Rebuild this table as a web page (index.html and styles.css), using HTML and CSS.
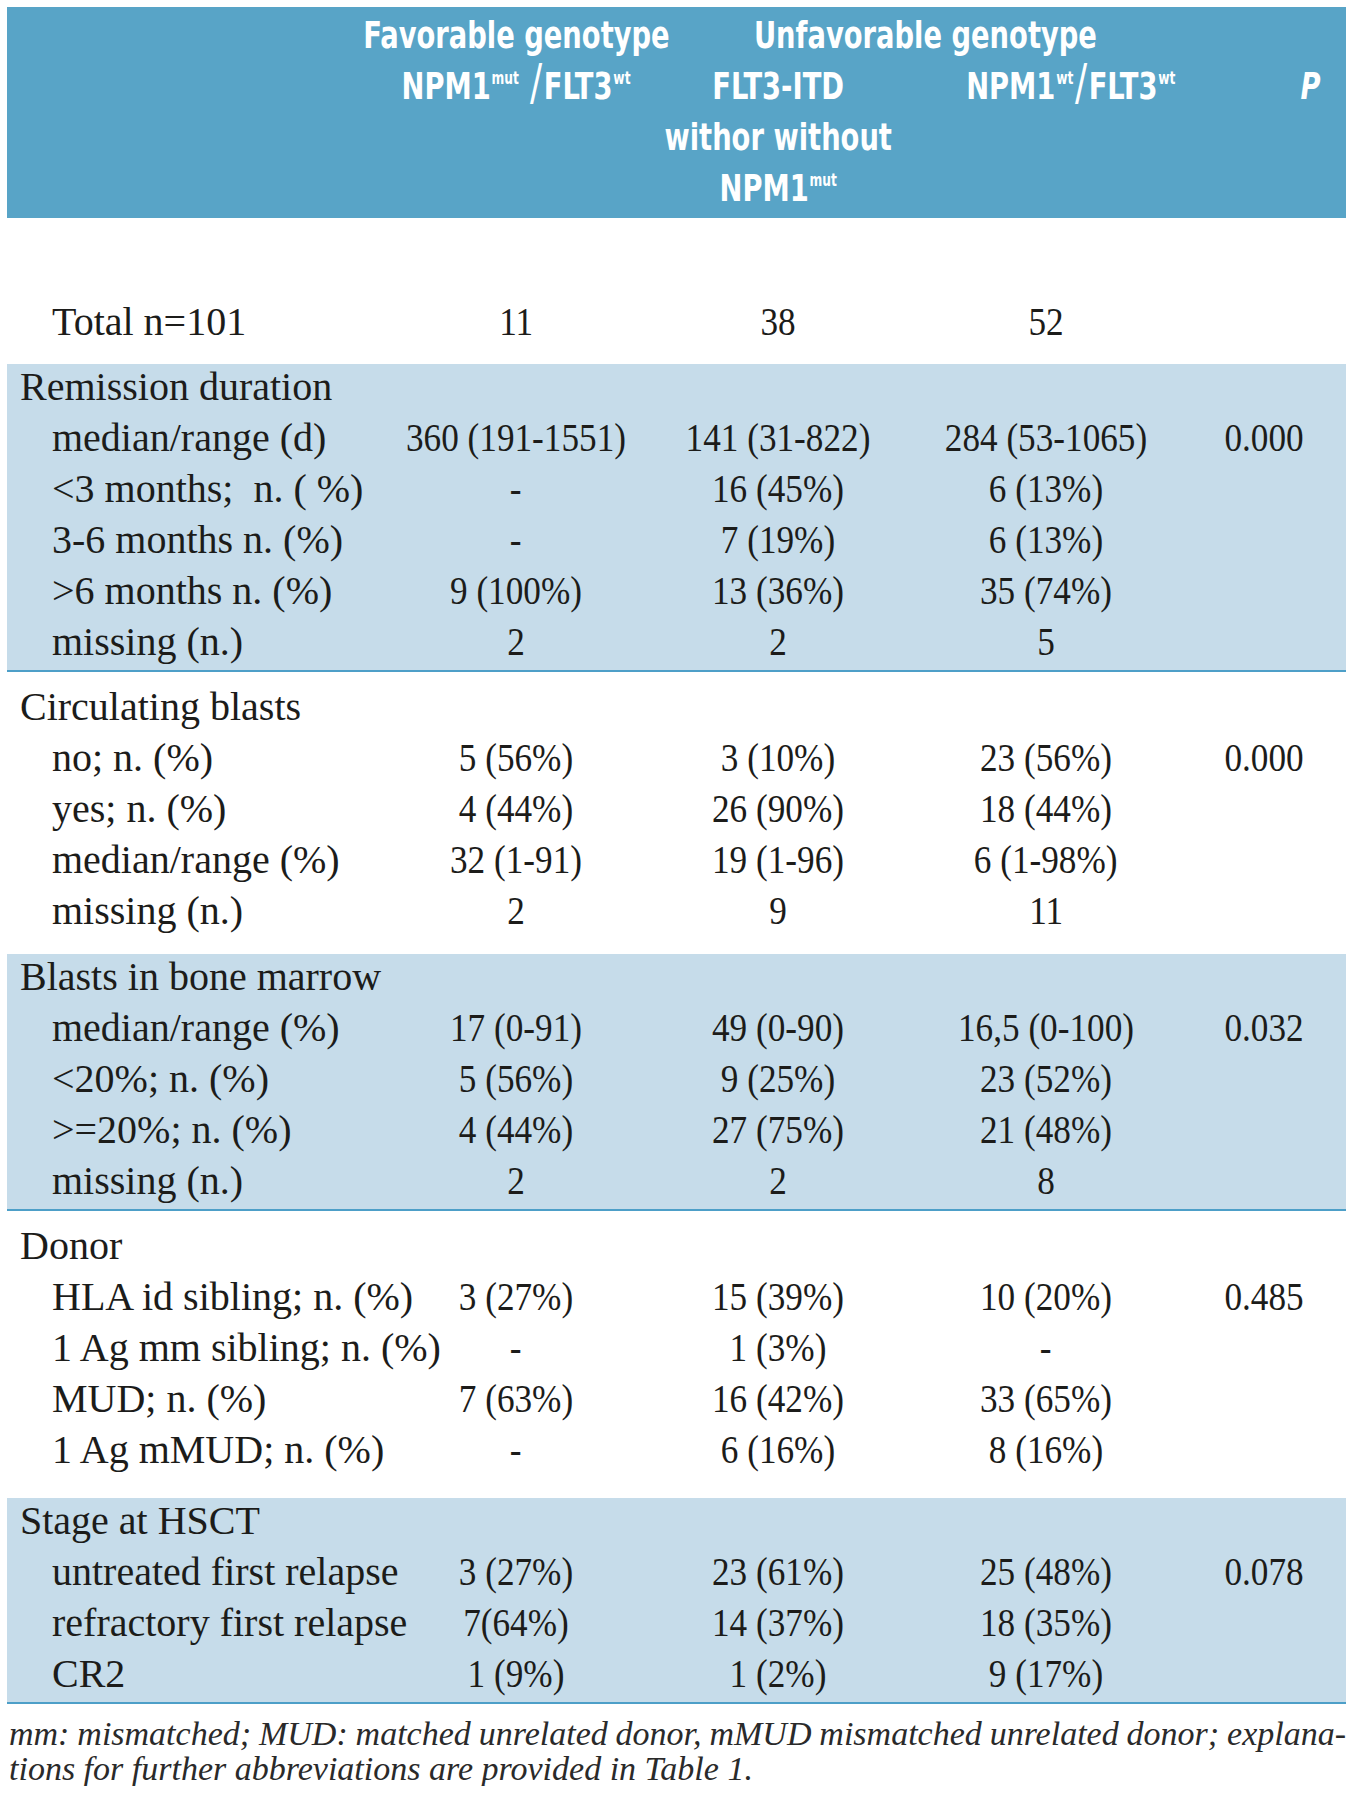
FILE: index.html
```html
<!DOCTYPE html>
<html lang="en">
<head>
<meta charset="utf-8">
<title>Table</title>
<link rel="stylesheet" href="styles.css">
</head>
<body>
<div class="page">
  <div class="thead">
    <div class="h h-c1 h-r1"><span class="hx">Favorable genotype</span></div>
    <div class="h h-span h-r1"><span class="hx">Unfavorable genotype</span></div>
    <div class="h h-c1 h-r2"><span class="hx">NPM1<span class="sup">mut</span> <span class="slash">/</span>FLT3<span class="sup">wt</span></span></div>
    <div class="h h-c2 h-r2"><span class="hx">FLT3-ITD<br>withor without<br>NPM1<span class="sup">mut</span></span></div>
    <div class="h h-c3 h-r2"><span class="hx">NPM1<span class="sup">wt</span><span class="slash">/</span>FLT3<span class="sup">wt</span></span></div>
    <div class="h h-p h-r2"><span class="hx">P</span></div>
  </div>

  <div class="row total">
    <div class="lab">Total n=101</div>
    <div class="c"><span class="num">11</span></div>
    <div class="c"><span class="num">38</span></div>
    <div class="c"><span class="num">52</span></div>
    <div class="c"></div>
  </div>

  <div class="sect blue">
    <div class="row"><div class="lab head">Remission duration</div></div>
    <div class="row"><div class="lab">median/range (d)</div><div class="c"><span class="num">360 (191-1551)</span></div><div class="c"><span class="num">141 (31-822)</span></div><div class="c"><span class="num">284 (53-1065)</span></div><div class="c"><span class="num">0.000</span></div></div>
    <div class="row"><div class="lab">&lt;3 months;&nbsp; n. ( %)</div><div class="c"><span class="num">-</span></div><div class="c"><span class="num">16 (45%)</span></div><div class="c"><span class="num">6 (13%)</span></div><div class="c"></div></div>
    <div class="row"><div class="lab">3-6 months n. (%)</div><div class="c"><span class="num">-</span></div><div class="c"><span class="num">7 (19%)</span></div><div class="c"><span class="num">6 (13%)</span></div><div class="c"></div></div>
    <div class="row"><div class="lab">&gt;6 months n. (%)</div><div class="c"><span class="num">9 (100%)</span></div><div class="c"><span class="num">13 (36%)</span></div><div class="c"><span class="num">35 (74%)</span></div><div class="c"></div></div>
    <div class="row"><div class="lab">missing (n.)</div><div class="c"><span class="num">2</span></div><div class="c"><span class="num">2</span></div><div class="c"><span class="num">5</span></div><div class="c"></div></div>
  </div>

  <div class="sect white">
    <div class="row"><div class="lab head">Circulating blasts</div></div>
    <div class="row"><div class="lab">no; n. (%)</div><div class="c"><span class="num">5 (56%)</span></div><div class="c"><span class="num">3 (10%)</span></div><div class="c"><span class="num">23 (56%)</span></div><div class="c"><span class="num">0.000</span></div></div>
    <div class="row"><div class="lab">yes; n. (%)</div><div class="c"><span class="num">4 (44%)</span></div><div class="c"><span class="num">26 (90%)</span></div><div class="c"><span class="num">18 (44%)</span></div><div class="c"></div></div>
    <div class="row"><div class="lab">median/range (%)</div><div class="c"><span class="num">32 (1-91)</span></div><div class="c"><span class="num">19 (1-96)</span></div><div class="c"><span class="num">6 (1-98%)</span></div><div class="c"></div></div>
    <div class="row"><div class="lab">missing (n.)</div><div class="c"><span class="num">2</span></div><div class="c"><span class="num">9</span></div><div class="c"><span class="num">11</span></div><div class="c"></div></div>
  </div>

  <div class="sect blue">
    <div class="row"><div class="lab head">Blasts in bone marrow</div></div>
    <div class="row"><div class="lab">median/range (%)</div><div class="c"><span class="num">17 (0-91)</span></div><div class="c"><span class="num">49 (0-90)</span></div><div class="c"><span class="num">16,5 (0-100)</span></div><div class="c"><span class="num">0.032</span></div></div>
    <div class="row"><div class="lab">&lt;20%; n. (%)</div><div class="c"><span class="num">5 (56%)</span></div><div class="c"><span class="num">9 (25%)</span></div><div class="c"><span class="num">23 (52%)</span></div><div class="c"></div></div>
    <div class="row"><div class="lab">&gt;=20%; n. (%)</div><div class="c"><span class="num">4 (44%)</span></div><div class="c"><span class="num">27 (75%)</span></div><div class="c"><span class="num">21 (48%)</span></div><div class="c"></div></div>
    <div class="row"><div class="lab">missing (n.)</div><div class="c"><span class="num">2</span></div><div class="c"><span class="num">2</span></div><div class="c"><span class="num">8</span></div><div class="c"></div></div>
  </div>

  <div class="sect white donor">
    <div class="row"><div class="lab head">Donor</div></div>
    <div class="row"><div class="lab">HLA id sibling; n. (%)</div><div class="c"><span class="num">3 (27%)</span></div><div class="c"><span class="num">15 (39%)</span></div><div class="c"><span class="num">10 (20%)</span></div><div class="c"><span class="num">0.485</span></div></div>
    <div class="row"><div class="lab">1 Ag mm sibling; n. (%)</div><div class="c"><span class="num">-</span></div><div class="c"><span class="num">1 (3%)</span></div><div class="c"><span class="num">-</span></div><div class="c"></div></div>
    <div class="row"><div class="lab">MUD; n. (%)</div><div class="c"><span class="num">7 (63%)</span></div><div class="c"><span class="num">16 (42%)</span></div><div class="c"><span class="num">33 (65%)</span></div><div class="c"></div></div>
    <div class="row"><div class="lab">1 Ag mMUD; n. (%)</div><div class="c"><span class="num">-</span></div><div class="c"><span class="num">6 (16%)</span></div><div class="c"><span class="num">8 (16%)</span></div><div class="c"></div></div>
  </div>

  <div class="sect blue">
    <div class="row"><div class="lab head">Stage at HSCT</div></div>
    <div class="row"><div class="lab">untreated first relapse</div><div class="c"><span class="num">3 (27%)</span></div><div class="c"><span class="num">23 (61%)</span></div><div class="c"><span class="num">25 (48%)</span></div><div class="c"><span class="num">0.078</span></div></div>
    <div class="row"><div class="lab">refractory first relapse</div><div class="c"><span class="num">7(64%)</span></div><div class="c"><span class="num">14 (37%)</span></div><div class="c"><span class="num">18 (35%)</span></div><div class="c"></div></div>
    <div class="row"><div class="lab">CR2</div><div class="c"><span class="num">1 (9%)</span></div><div class="c"><span class="num">1 (2%)</span></div><div class="c"><span class="num">9 (17%)</span></div><div class="c"></div></div>
  </div>

  <div class="foot">
    <p class="fline full">mm: mismatched; MUD: matched unrelated donor, mMUD mismatched unrelated donor; explana-</p>
    <p class="fline">tions for further abbreviations are provided in Table 1.</p>
  </div>
</div>
</body>
</html>
```

FILE: styles.css
```css
html, body {
  margin: 0;
  padding: 0;
  background: #ffffff;
}

.page {
  padding: 7px 6px 0 7px;
  font-family: "Liberation Serif", "Times New Roman", serif;
  color: #1c1c1a;
}

/* ---------- header ---------- */
.thead {
  display: grid;
  grid-template-columns: 379px 260px 264px 322px 1fr;
  grid-template-rows: 51px 153px;
  background: #58a4c7;
  color: #ffffff;
  padding: 3px 0 4px;
  font-family: "DejaVu Sans", sans-serif;
  font-stretch: condensed;
  font-weight: 700;
  font-size: 38px;
  line-height: 51px;
  white-space: nowrap;
}

.h {
  display: flex;
  justify-content: center;
  align-items: flex-start;
  text-align: center;
  min-width: 0;
}

.hx {
  display: inline-block;
  transform: scaleX(0.8);
}

.h-r1 { grid-row: 1; }
.h-r2 { grid-row: 2; }
.h-c1 { grid-column: 2; }
.h-c2 { grid-column: 3; }
.h-c3 { grid-column: 4; }
.h-span {
  grid-column: 3 / 5;
  padding-right: 28px;
}
.h-p {
  grid-column: 5;
  padding-left: 44px;
  font-style: italic;
}

.sup {
  font-size: 17px;
  vertical-align: 15px;
  line-height: 0;
  margin-left: 1px;
}

.slash {
  font-weight: 400;
  font-size: 50px;
  line-height: 0;
  margin: 0 2px;
}

/* ---------- body rows ---------- */
.row {
  display: grid;
  grid-template-columns: 379px 260px 264px 272px 1fr;
  height: 51px;
  font-size: 40px;
  line-height: 45px;
  white-space: nowrap;
}

.lab {
  padding-left: 45px;
}

.lab.head {
  padding-left: 13px;
}

.c {
  text-align: center;
}

.num {
  display: inline-block;
  transform: scaleX(0.88);
}

.row.total {
  padding: 81px 0 14px;
  height: 51px;
}

.sect.blue {
  background: #c6dcea;
  border-bottom: 2px solid #4d9fc8;
}

.sect.white {
  padding: 12px 0 15px;
}

.sect.white.donor {
  padding-bottom: 20px;
}

/* ---------- footnote ---------- */
.foot {
  padding: 12px 0 0 2px;
  font-family: "Liberation Serif", "Times New Roman", serif;
  font-style: italic;
  font-size: 34px;
  line-height: 35px;
  color: #2a2a2a;
}

.fline {
  margin: 0;
  white-space: nowrap;
}

.fline.full {
  text-align: justify;
  text-align-last: justify;
  white-space: normal;
  word-spacing: -5px;
}
```
